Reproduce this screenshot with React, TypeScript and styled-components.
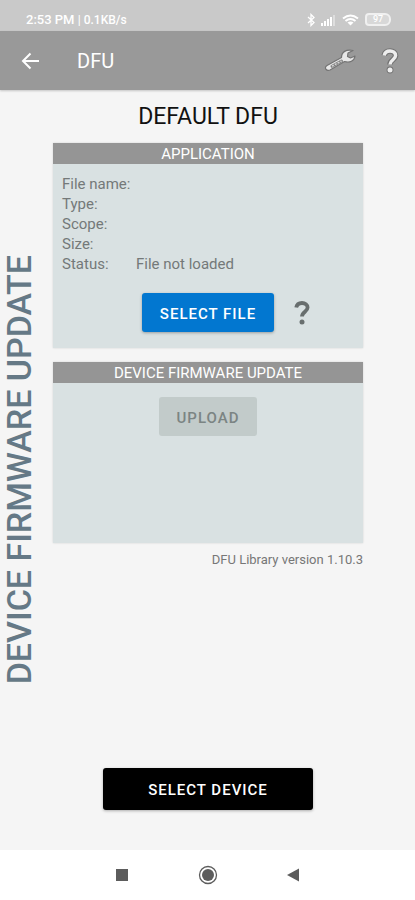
import React from 'react';
import styled, { createGlobalStyle } from 'styled-components';

const GlobalStyle = createGlobalStyle`
  * { box-sizing: border-box; }
  body {
    margin: 0;
    background: #f5f5f5;
    font-family: Roboto, "Liberation Sans", sans-serif;
  }
`;

const Screen = styled.div`
  display: flex;
  flex-direction: column;
  min-height: 100vh;
`;

const StatusBar = styled.div`
  display: flex;
  align-items: center;
  justify-content: space-between;
  height: 31px;
  padding: 8px 24px 0 26px;
  background: #c9c9c9;
  color: #fff;
  font-size: 13px;
  font-weight: 500;
`;

const Speed = styled.span`
  font-size: 12px;
`;

const StatusIcons = styled.div`
  display: flex;
  align-items: center;
  gap: 6px;
`;

const AppBar = styled.header`
  display: flex;
  align-items: center;
  height: 59px;
  padding: 0 15px 0 18px;
  background: #999;
  color: #fff;
  box-shadow: 0 1px 2px rgba(0, 0, 0, 0.2);
`;

const IconButton = styled.button`
  display: flex;
  padding: 0;
  border: 0;
  background: none;
  color: inherit;
  cursor: pointer;
`;

const AppTitle = styled.h1`
  flex: 1;
  margin: 0 0 0 35px;
  font-size: 20px;
  font-weight: 400;
`;

const Actions = styled.div`
  display: flex;
  align-items: center;
  gap: 24px;
`;

const Main = styled.main`
  flex: 1;
  display: grid;
  grid-template-columns: 53px minmax(0, 1fr) 52px;
`;

const SideTitle = styled.div`
  justify-self: center;
  align-self: center;
  padding-left: 15px;
  writing-mode: vertical-rl;
  transform: rotate(180deg);
  white-space: nowrap;
  font-size: 34px;
  line-height: 38px;
  font-weight: 500;
  color: #657986;
`;

const Content = styled.div`
  display: flex;
  flex-direction: column;
  padding: 12px 0 40px;
`;

const Heading = styled.h2`
  margin: 0 0 11px;
  font-size: 23px;
  line-height: 30px;
  font-weight: 400;
  text-align: center;
  color: #111;
`;

const Panel = styled.section<{ $height: number }>`
  display: flex;
  flex-direction: column;
  min-height: ${(p) => p.$height}px;
  margin-bottom: 14px;
  background: #d9e1e2;
  box-shadow: 0 0 2px rgba(0, 0, 0, 0.14);
`;

const PanelTitle = styled.h3`
  margin: 0;
  padding-top: 2px;
  background: #959595;
  color: #fff;
  font-size: 15px;
  line-height: 19px;
  font-weight: 400;
  text-align: center;
`;

const FileInfo = styled.dl`
  display: grid;
  grid-template-columns: 74px 1fr;
  margin: 10px 9px 0;
  font-size: 15px;
  line-height: 20px;
  color: #747979;
`;

const Value = styled.dd`
  margin: 0;
`;

const ButtonRow = styled.div<{ $top: number }>`
  display: grid;
  grid-template-columns: 1fr auto 1fr;
  align-items: center;
  gap: 18px;
  margin-top: ${(p) => p.$top}px;
`;

const Button = styled.button<{ $tone: 'primary' | 'dark' }>`
  height: ${(p) => (p.$tone === 'dark' ? 42 : 39)}px;
  padding: 2px 18px 0;
  border: 0;
  border-radius: 3px;
  background: ${(p) => (p.$tone === 'dark' ? '#000' : '#0277d0')};
  color: #fff;
  font: 500 15px Roboto, "Liberation Sans", sans-serif;
  letter-spacing: 1px;
  box-shadow: 0 1px 3px rgba(0, 0, 0, 0.3);
  cursor: pointer;

  &:disabled {
    background: #c2cbca;
    color: #7b8483;
    box-shadow: none;
    cursor: default;
  }
`;

const SelectDevice = styled(Button)`
  align-self: center;
  width: 68%;
  margin-top: auto;
`;

const Version = styled.p`
  margin: 0;
  margin-top: -6px;
  font-size: 13px;
  line-height: 17px;
  text-align: right;
  color: #777;
`;

const NavBar = styled.nav`
  display: flex;
  align-items: center;
  justify-content: center;
  gap: 62px;
  height: 50px;
  background: #fff;
  color: #5c5c5c;
`;

const Battery = styled.span`
  display: flex;
  align-items: center;
  justify-content: center;
  width: 26px;
  height: 13px;
  border: 2px solid #f0f0f0;
  border-radius: 4px 6px 6px 4px;
  background: #d8d8d8;
  font-size: 9px;
  line-height: 9px;
`;

const QuestionIcon = ({ outlined = false }: { outlined?: boolean }) => (
  <svg width="20" height="28" viewBox="0 0 20 28" fill="none" aria-hidden="true">
    {outlined && (
      <g stroke="#737373">
        <path d="M4.200 8.500C4.800 5.500 7 4 10 4s5.600 1.700 5.600 4.600c0 4-5.600 4.300-5.600 8.900" strokeWidth="5.600" />
        <circle cx="10" cy="23" r="2.700" strokeWidth="1.500" />
      </g>
    )}
    <path
      d="M4.200 8.500C4.800 5.500 7 4 10 4s5.600 1.700 5.600 4.600c0 4-5.600 4.300-5.600 8.900"
      stroke={outlined ? '#eee' : '#686e6e'}
      strokeWidth={outlined ? 3.4 : 3.8}
    />
    <circle cx="10" cy="23" r="2.500" fill={outlined ? '#eee' : '#686e6e'} />
  </svg>
);

const WrenchIcon = () => (
  <svg width="32" height="26" viewBox="0 0 32 26" fill="none" strokeLinejoin="round" aria-hidden="true">
    <path
      d="M3 17.500 17.500 9.500C17.500 4 22 1 29 2.500l-5 2.500-.5 3.500 3 1.500 4.500-2c-.5 5-5.500 7-10.500 5.500L6 22C2.500 23.500-.5 19.500 3 17.500Z"
      fill="#e8e8e8"
      stroke="#737373"
      strokeWidth="1.200"
    />
    <path d="m8 18.200 9.500-5.200" stroke="#828282" strokeWidth="3" strokeLinecap="round" />
    <path d="m8 18.200 9.500-5.200" stroke="#d6d6d6" strokeWidth="1.500" strokeDasharray="2 1.200" />
  </svg>
);

const FIELDS: [string, string][] = [
  ['File name:', ''],
  ['Type:', ''],
  ['Scope:', ''],
  ['Size:', ''],
  ['Status:', 'File not loaded'],
];

export default function App() {
  return (
    <Screen>
      <GlobalStyle />
      <StatusBar>
        <span>2:53 PM <Speed>| 0.1KB/s</Speed></span>
        <StatusIcons>
          <svg width="8" height="14" viewBox="0 0 8 14" fill="none" stroke="#fff" strokeWidth="1.300" aria-hidden="true">
            <path d="m1 4 6 5.500L4 12.500v-11l3 3L1 10" />
          </svg>
          <svg width="15" height="12" viewBox="0 0 15 12" fill="#fff" aria-hidden="true">
            <path d="M0 9h2v3H0zM3 7h2v5H3zM6 5h2v7H6zM9 3h2v9H9z" />
            <path d="M12 1h2v11h-2z" opacity=".4" />
          </svg>
          <svg width="17" height="12" viewBox="0 0 17 12" fill="none" stroke="#fff" strokeWidth="2" aria-hidden="true">
            <path d="M1 4.500q7.500-6 15 0M3.500 7q5-4 10 0" />
            <path d="m8.500 11.500-3-3q3-2 6 0Z" fill="#fff" stroke="none" />
          </svg>
          <Battery>97</Battery>
        </StatusIcons>
      </StatusBar>
      <AppBar>
        <IconButton aria-label="Back">
          <svg width="24" height="24" viewBox="0 0 24 24" fill="none" stroke="#fff" strokeWidth="2" aria-hidden="true">
            <path d="M21 12H5M12.500 4.500 5 12l7.500 7.500" />
          </svg>
        </IconButton>
        <AppTitle>DFU</AppTitle>
        <Actions>
          <IconButton aria-label="Settings"><WrenchIcon /></IconButton>
          <IconButton aria-label="Help"><QuestionIcon outlined /></IconButton>
        </Actions>
      </AppBar>
      <Main>
        <SideTitle>DEVICE FIRMWARE UPDATE</SideTitle>
        <Content>
          <Heading>DEFAULT DFU</Heading>
          <Panel $height={205}>
            <PanelTitle>APPLICATION</PanelTitle>
            <FileInfo>
              {FIELDS.map(([name, value]) => (
                <React.Fragment key={name}>
                  <dt>{name}</dt>
                  <Value>{value}</Value>
                </React.Fragment>
              ))}
            </FileInfo>
            <ButtonRow $top={19}>
              <span />
              <Button $tone="primary">SELECT FILE</Button>
              <IconButton aria-label="File help"><QuestionIcon /></IconButton>
            </ButtonRow>
          </Panel>
          <Panel $height={181}>
            <PanelTitle>DEVICE FIRMWARE UPDATE</PanelTitle>
            <ButtonRow $top={14}>
              <span />
              <Button $tone="primary" disabled>UPLOAD</Button>
            </ButtonRow>
          </Panel>
          <Version>DFU Library version 1.10.3</Version>
          <SelectDevice $tone="dark">SELECT DEVICE</SelectDevice>
        </Content>
      </Main>
      <NavBar>
        <IconButton aria-label="Recent apps">
          <svg width="24" height="24" viewBox="0 0 24 24" aria-hidden="true">
            <path d="M6 6h12v12H6z" fill="currentColor" />
          </svg>
        </IconButton>
        <IconButton aria-label="Home">
          <svg width="24" height="24" viewBox="0 0 24 24" aria-hidden="true">
            <circle cx="12" cy="12" r="8.500" fill="none" stroke="currentColor" strokeWidth="1.300" />
            <circle cx="12" cy="12" r="6" fill="currentColor" />
          </svg>
        </IconButton>
        <IconButton aria-label="Navigate back">
          <svg width="24" height="24" viewBox="0 0 24 24" aria-hidden="true">
            <path d="M5 12 17 5.500v13Z" fill="currentColor" />
          </svg>
        </IconButton>
      </NavBar>
    </Screen>
  );
}
